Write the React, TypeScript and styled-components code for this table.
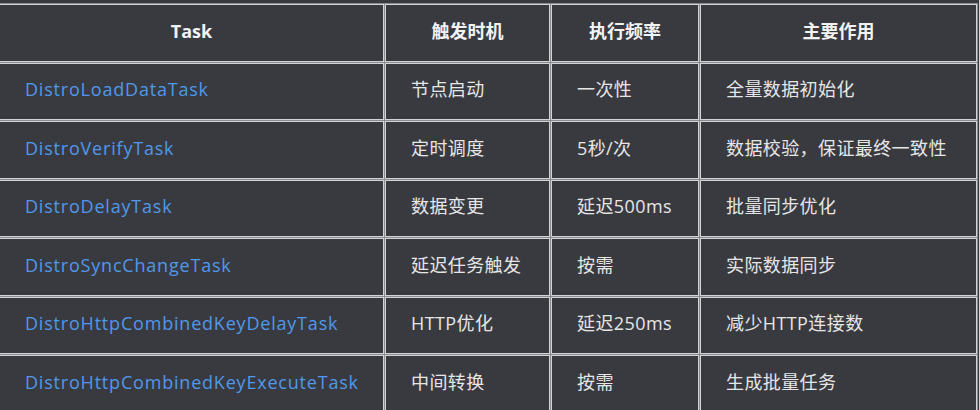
import React from "react";
import styled, { createGlobalStyle } from "styled-components";

type Row = {
  task: string;
  trigger: string;
  rate: string;
  role: string;
};

const rows: Row[] = [
  { task: "DistroLoadDataTask", trigger: "节点启动", rate: "一次性", role: "全量数据初始化" },
  { task: "DistroVerifyTask", trigger: "定时调度", rate: "5秒/次", role: "数据校验，保证最终一致性" },
  { task: "DistroDelayTask", trigger: "数据变更", rate: "延迟500ms", role: "批量同步优化" },
  { task: "DistroSyncChangeTask", trigger: "延迟任务触发", rate: "按需", role: "实际数据同步" },
  { task: "DistroHttpCombinedKeyDelayTask", trigger: "HTTP优化", rate: "延迟250ms", role: "减少HTTP连接数" },
  { task: "DistroHttpCombinedKeyExecuteTask", trigger: "中间转换", rate: "按需", role: "生成批量任务" },
];

const GlobalStyle = createGlobalStyle`
  html, body {
    margin: 0;
    padding: 0;
    background: #393a40;
    overflow: hidden;
  }
  body {
    font-family: "Open Sans", "Noto Sans CJK SC", sans-serif;
  }
`;

const Page = styled.div`
  width: 979px;
  height: 410px;
  background: #393a40;
  padding-top: 3px;
`;

const Table = styled.table`
  width: 980px;
  margin-left: -2px;
  table-layout: fixed;
  border-collapse: separate;
  border-spacing: 1px;
  background: #8a8b8f;
  font-size: 18px;
  line-height: 26px;
`;

const Cell = styled.td`
  background: #393a40;
  border: 1px solid #d2d3d6;
  padding: 12.5px 25px 17px;
  color: #e6e6e6;
  white-space: nowrap;
  text-align: left;
  letter-spacing: 0.4px;
`;

const HeadCell = styled(Cell).attrs({ as: "th" })`
  font-weight: 700;
  text-align: center;
  color: #f2f2f2;
  letter-spacing: 0;
`;

const TaskName = styled.span`
  color: #4f98ea;
  letter-spacing: 0.8px;
`;

export default function App() {
  return (
    <>
      <GlobalStyle />
      <Page>
        <Table>
          <colgroup>
            <col style={{ width: 385 }} />
            <col style={{ width: 165 }} />
            <col style={{ width: 148 }} />
            <col />
          </colgroup>
          <thead>
            <tr>
              <HeadCell>Task</HeadCell>
              <HeadCell>触发时机</HeadCell>
              <HeadCell>执行频率</HeadCell>
              <HeadCell>主要作用</HeadCell>
            </tr>
          </thead>
          <tbody>
            {rows.map((r) => (
              <tr key={r.task}>
                <Cell>
                  <TaskName>{r.task}</TaskName>
                </Cell>
                <Cell>{r.trigger}</Cell>
                <Cell>{r.rate}</Cell>
                <Cell>{r.role}</Cell>
              </tr>
            ))}
          </tbody>
        </Table>
      </Page>
    </>
  );
}
